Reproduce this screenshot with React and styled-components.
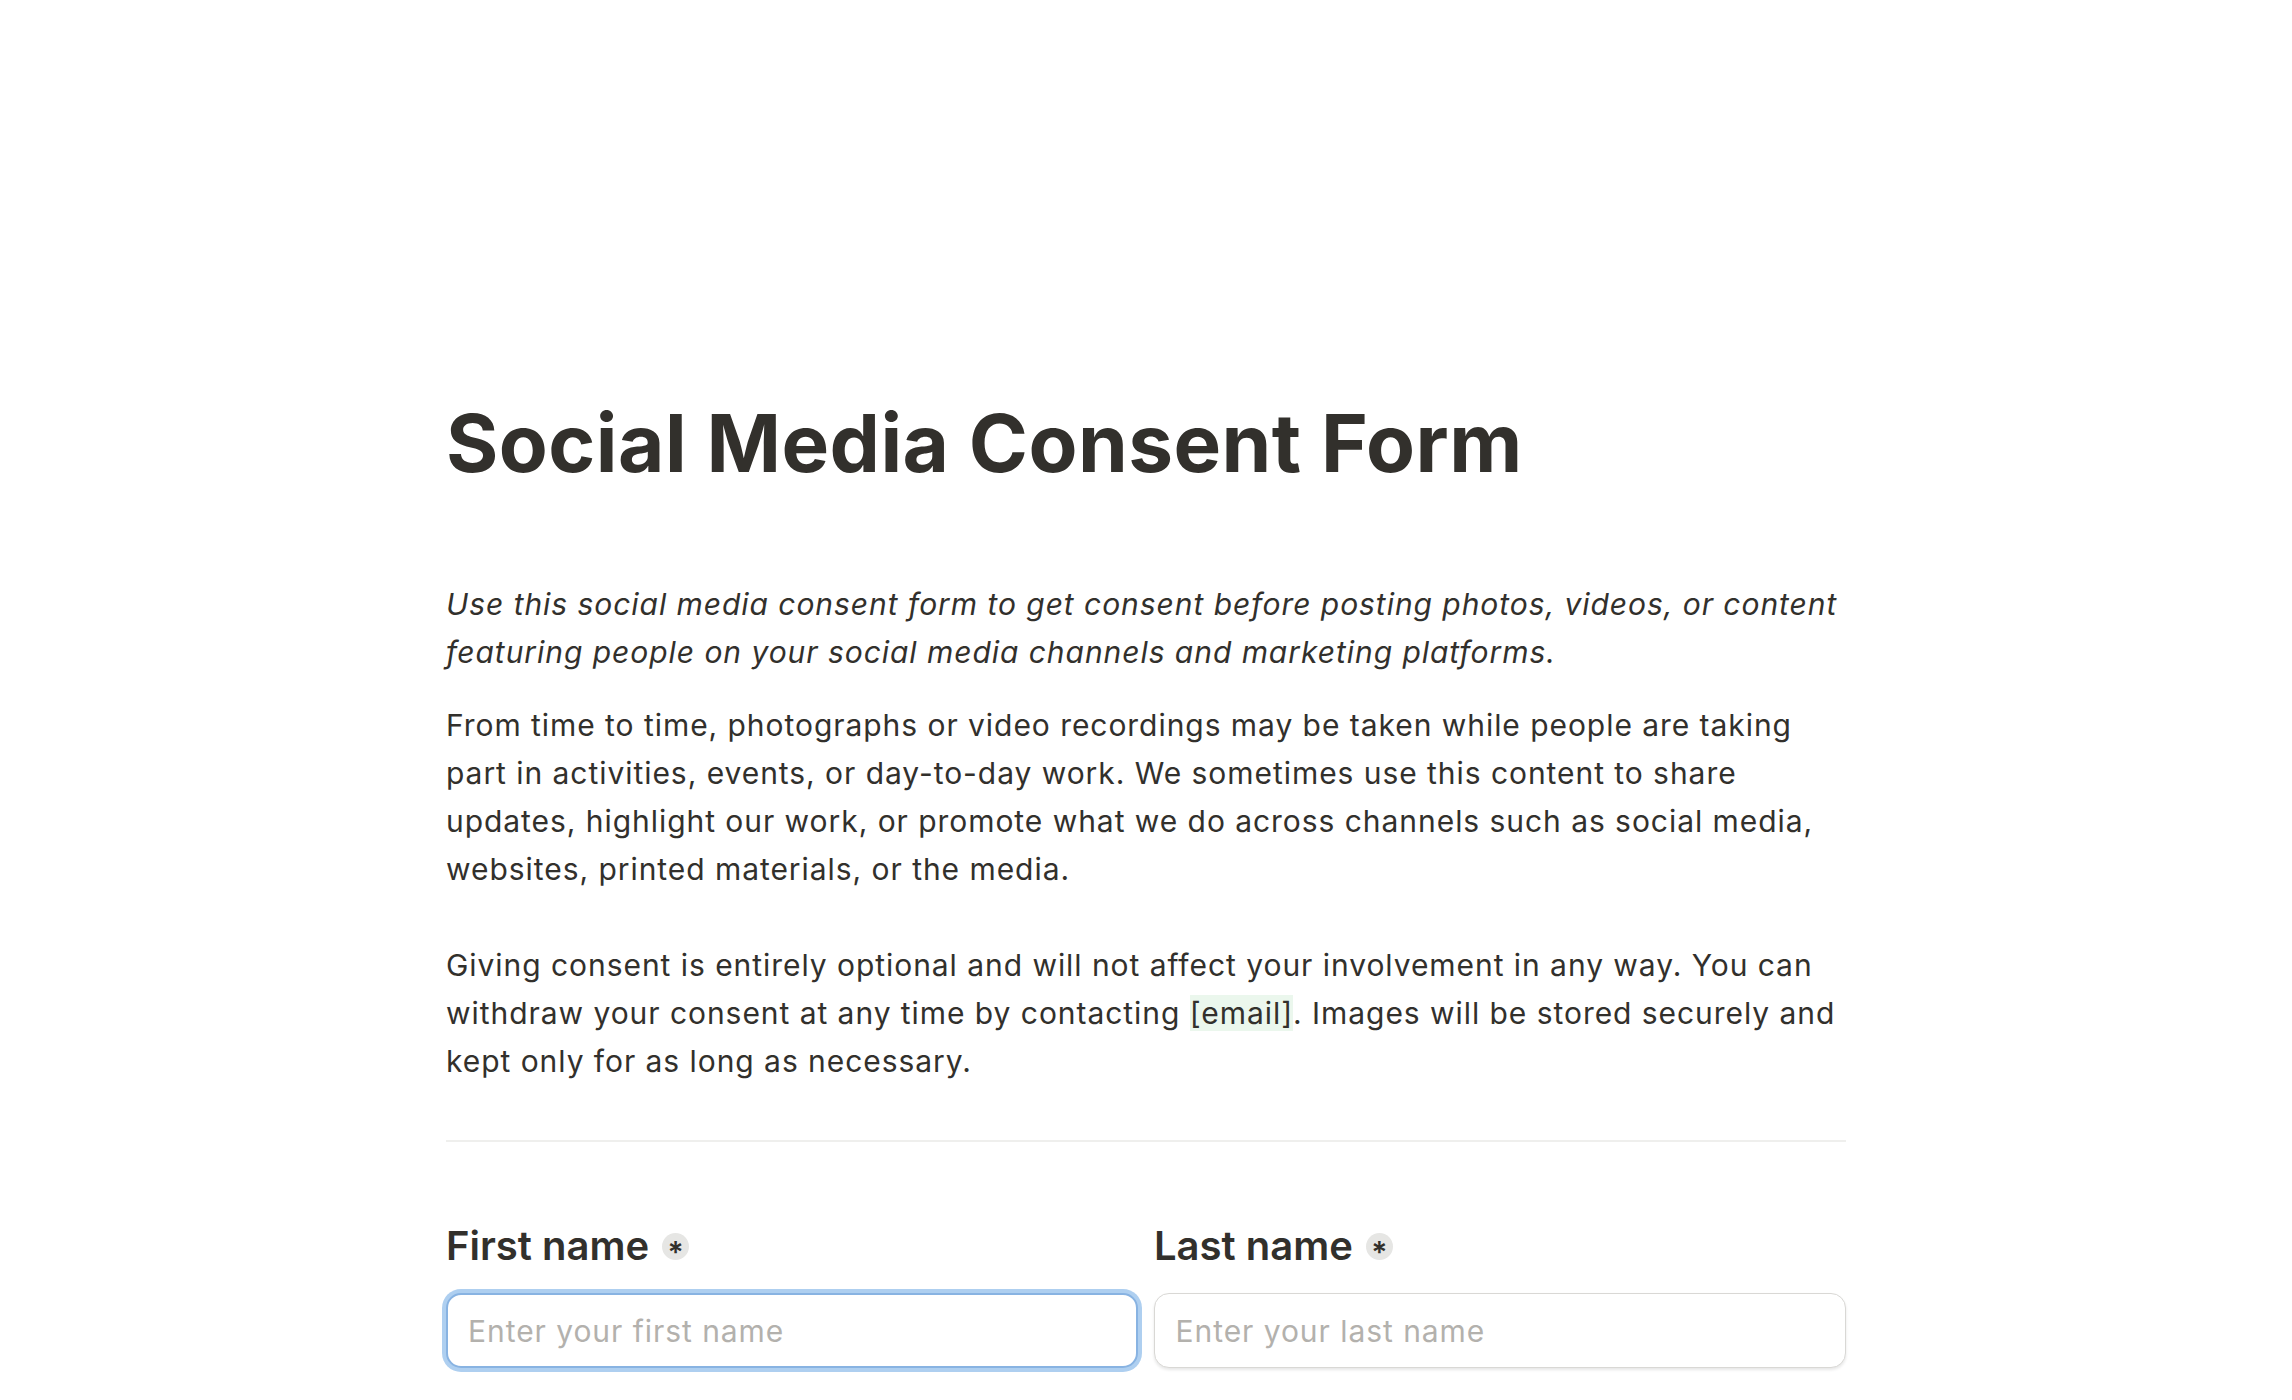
import React from "react";
import styled, { createGlobalStyle } from "styled-components";

const GlobalStyle = createGlobalStyle`
  html, body {
    margin: 0;
    padding: 0;
    background: #ffffff;
  }
  body {
    font-family: Inter, "Noto Sans", "Liberation Sans", sans-serif;
    color: #32302c;
    -webkit-font-smoothing: antialiased;
  }
  * { box-sizing: border-box; }
`;

const Page = styled.div`
  display: flex;
  justify-content: center;
  padding-top: 395px;
  min-height: 1400px;
`;

const Column = styled.main`
  width: 1400px;
  display: flex;
  flex-direction: column;
`;

const Title = styled.h1`
  margin: 0;
  font-size: 80px;
  line-height: 96px;
  font-weight: 700;
  letter-spacing: 0.45px;
  color: #32302c;
`;

const Lead = styled.p`
  margin: 89px 0 0;
  font-size: 30px;
  line-height: 48px;
  font-style: italic;
  letter-spacing: 0.95px;
  color: #32302c;
`;

const Body = styled.div`
  margin-top: 25px;
  display: flex;
  flex-direction: column;
  gap: 48px;
`;

const Para = styled.p`
  margin: 0;
  font-size: 30px;
  line-height: 48px;
  letter-spacing: 0.95px;
  color: #32302c;
`;

const Highlight = styled.span`
  background: #ebf7ed;
`;

const Divider = styled.hr`
  margin: 55px 0 0;
  border: none;
  height: 2px;
  background: #efefed;
`;

const FieldRow = styled.div`
  margin-top: 80px;
  display: grid;
  grid-template-columns: 1fr 1fr;
  column-gap: 16px;
`;

const Field = styled.div`
  display: flex;
  flex-direction: column;
  gap: 23px;
`;

const Label = styled.label`
  display: flex;
  align-items: center;
  gap: 13px;
  font-size: 40px;
  line-height: 48px;
  font-weight: 600;
  color: #32302c;
`;

const Required = styled.span`
  display: block;
  flex: none;
  width: 27px;
  height: 27px;
  border-radius: 50%;
  background: #e6e6e4;
  color: #32302c;
  font-size: 30px;
  font-weight: 600;
  line-height: 27px;
  text-align: center;
`;

const Star = styled.span`
  position: relative;
  top: 6px;
`;

const Input = styled.input`
  width: 100%;
  height: 75px;
  border-radius: 15px;
  border: ${(p) => (p.$focused ? "2px solid #88b3e2" : "1.5px solid #d9d8d5")};
  box-shadow: ${(p) =>
    p.$focused
      ? "0 0 0 4px #aecff0"
      : "0 2px 3px rgba(15, 15, 15, 0.1)"};
  padding: 0 ${(p) => (p.$focused ? "20px" : "20.5px")};
  font-family: Inter, "Noto Sans", "Liberation Sans", sans-serif;
  font-size: 30px;
  letter-spacing: 0.95px;
  color: #32302c;
  background: #ffffff;
  outline: none;
  &::placeholder {
    color: #b3b1ad;
  }
`;

export default function App() {
  return (
    <>
      <GlobalStyle />
      <Page>
        <Column>
          <Title>Social Media Consent Form</Title>
          <Lead>
            Use this social media consent form to get consent before posting
            photos, videos, or content featuring people on your social media
            channels and marketing platforms.
          </Lead>
          <Body>
            <Para>
              From time to time, photographs or video recordings may be taken
              while people are taking part in activities, events, or
              day-to-day work. We sometimes use this content to share updates,
              highlight our work, or promote what we do across channels such as
              social media, websites, printed materials, or the media.
            </Para>
            <Para>
              Giving consent is entirely optional and will not affect your
              involvement in any way. You can withdraw your consent at any time
              by contacting <Highlight>[email]</Highlight>. Images will be
              stored securely and kept only for as long as necessary.
            </Para>
          </Body>
          <Divider />
          <FieldRow>
            <Field>
              <Label>
                First name{" "}
                <Required>
                  <Star>*</Star>
                </Required>
              </Label>
              <Input $focused placeholder="Enter your first name" />
            </Field>
            <Field>
              <Label>
                Last name{" "}
                <Required>
                  <Star>*</Star>
                </Required>
              </Label>
              <Input placeholder="Enter your last name" />
            </Field>
          </FieldRow>
        </Column>
      </Page>
    </>
  );
}
